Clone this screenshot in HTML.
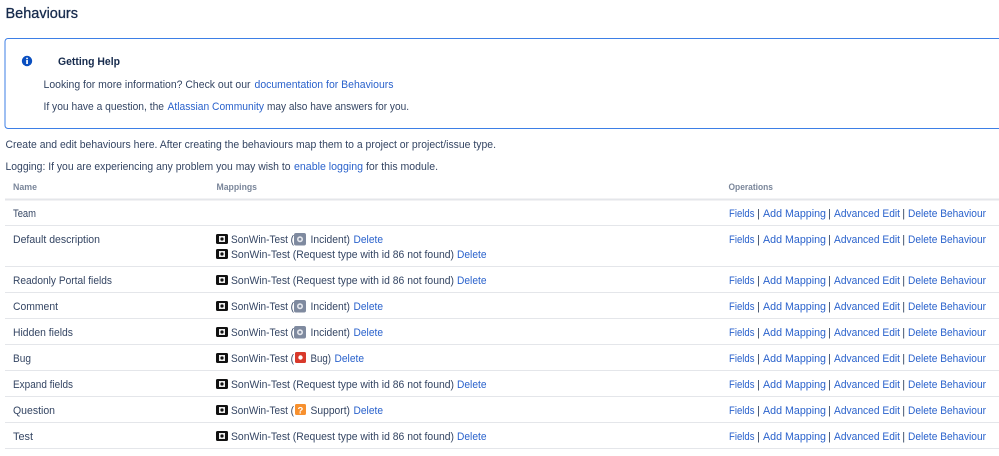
<!DOCTYPE html>
<html><head><meta charset="utf-8"><title>Behaviours</title>
<style>
html,body{margin:0;padding:0;background:#fff;width:999px;height:456px;overflow:hidden}
svg{display:block}
text{font-family:"Liberation Sans",sans-serif;font-size:11px;fill:#344563;white-space:pre}
.a{fill:#2a62cc}
.h{font-size:9.5px;fill:#7a869a;font-weight:bold}
</style></head><body>
<svg width="999" height="456" viewBox="0 0 999 456" xmlns="http://www.w3.org/2000/svg">
<defs>
<g id="logo"><rect x="0" y="0" width="12" height="10" rx="1.5" fill="#111"/><rect x="3" y="2" width="6" height="6" fill="#eee"/><circle cx="6" cy="5" r="1.6" fill="#111"/></g>
<g id="inc"><rect x="0" y="0" width="12" height="12.500" rx="2" fill="#7f8a9f"/><circle cx="6" cy="6.250" r="3" fill="#e6e8ee"/><circle cx="6" cy="6.250" r="1.400" fill="#7f8a9f"/></g>
</defs>
<text lengthAdjust="spacingAndGlyphs" x="5.500" y="18" textLength="72.500" style="font-size:15px;fill:#172b4d;stroke:#172b4d;stroke-width:.3">Behaviours</text>
<path d="M1000 38.500H8a3 3 0 0 0-3 3V125.500a3 3 0 0 0 3 3H1000" fill="none" stroke="#3d7fe6" stroke-width="1"/>
<circle cx="27" cy="61" r="5.200" fill="#0a4fc0"/><rect x="26.200" y="60" width="1.700" height="4" fill="#fff"/><rect x="26.200" y="57.700" width="1.700" height="1.500" fill="#fff"/>
<text lengthAdjust="spacingAndGlyphs" x="58" y="65" textLength="62" style="font-weight:bold;fill:#172b4d">Getting Help</text>
<text lengthAdjust="spacingAndGlyphs" x="43.500" y="88" textLength="207">Looking for more information? Check out our</text>
<text lengthAdjust="spacingAndGlyphs" class="a" x="254.500" y="88" textLength="139">documentation for Behaviours</text>
<text lengthAdjust="spacingAndGlyphs" x="43.500" y="110" textLength="120.500">If you have a question, the</text>
<text lengthAdjust="spacingAndGlyphs" class="a" x="167.500" y="110" textLength="96.500">Atlassian Community</text>
<text lengthAdjust="spacingAndGlyphs" x="267" y="110" textLength="142">may also have answers for you.</text>
<text lengthAdjust="spacingAndGlyphs" x="5.500" y="148" textLength="490.500">Create and edit behaviours here. After creating the behaviours map them to a project or project/issue type.</text>
<text lengthAdjust="spacingAndGlyphs" x="5.500" y="170" textLength="285">Logging: If you are experiencing any problem you may wish to</text>
<text lengthAdjust="spacingAndGlyphs" class="a" x="294" y="170" textLength="69">enable logging</text>
<text lengthAdjust="spacingAndGlyphs" x="366" y="170" textLength="72">for this module.</text>
<text lengthAdjust="spacingAndGlyphs" class="h" x="13" y="190" textLength="24">Name</text>
<text lengthAdjust="spacingAndGlyphs" class="h" x="216.500" y="190" textLength="40.500">Mappings</text>
<text lengthAdjust="spacingAndGlyphs" class="h" x="728.500" y="190" textLength="44.500">Operations</text>
<g fill="#e4e6ea">
<rect x="5" y="198.500" width="994" height="2"/>
<rect x="5" y="225" width="994" height="1"/>
<rect x="5" y="266" width="994" height="1"/>
<rect x="5" y="292" width="994" height="1"/>
<rect x="5" y="318" width="994" height="1"/>
<rect x="5" y="344" width="994" height="1"/>
<rect x="5" y="370" width="994" height="1"/>
<rect x="5" y="396" width="994" height="1"/>
<rect x="5" y="422" width="994" height="1"/>
<rect x="5" y="448" width="994" height="1"/>
</g>
<text lengthAdjust="spacingAndGlyphs" x="13" y="217" textLength="23">Team</text>
<text lengthAdjust="spacingAndGlyphs" x="13" y="243" textLength="87">Default description</text>
<text lengthAdjust="spacingAndGlyphs" x="13" y="284" textLength="99">Readonly Portal fields</text>
<text lengthAdjust="spacingAndGlyphs" x="13" y="310" textLength="45">Comment</text>
<text lengthAdjust="spacingAndGlyphs" x="13" y="336" textLength="60">Hidden fields</text>
<text lengthAdjust="spacingAndGlyphs" x="13" y="362" textLength="18">Bug</text>
<text lengthAdjust="spacingAndGlyphs" x="13" y="388" textLength="60">Expand fields</text>
<text lengthAdjust="spacingAndGlyphs" x="13" y="414" textLength="42">Question</text>
<text lengthAdjust="spacingAndGlyphs" x="13" y="440" textLength="20">Test</text>

<use href="#logo" x="216" y="234"/>
<text lengthAdjust="spacingAndGlyphs" x="231" y="243" textLength="63">SonWin-Test (</text>
<use href="#inc" x="294" y="233"/>
<text lengthAdjust="spacingAndGlyphs" x="310.500" y="243" textLength="39.500">Incident)</text>
<text lengthAdjust="spacingAndGlyphs" class="a" x="353.500" y="243" textLength="29.500">Delete</text>
<use href="#logo" x="216" y="249"/>
<text lengthAdjust="spacingAndGlyphs" x="231" y="258" textLength="223">SonWin-Test (Request type with id 86 not found)</text>
<text lengthAdjust="spacingAndGlyphs" class="a" x="457" y="258" textLength="29.500">Delete</text>

<use href="#logo" x="216" y="275"/>
<text lengthAdjust="spacingAndGlyphs" x="231" y="284" textLength="223">SonWin-Test (Request type with id 86 not found)</text>
<text lengthAdjust="spacingAndGlyphs" class="a" x="457" y="284" textLength="29.500">Delete</text>

<use href="#logo" x="216" y="301"/>
<text lengthAdjust="spacingAndGlyphs" x="231" y="310" textLength="63">SonWin-Test (</text>
<use href="#inc" x="294" y="300"/>
<text lengthAdjust="spacingAndGlyphs" x="310.500" y="310" textLength="39.500">Incident)</text>
<text lengthAdjust="spacingAndGlyphs" class="a" x="353.500" y="310" textLength="29.500">Delete</text>

<use href="#logo" x="216" y="327"/>
<text lengthAdjust="spacingAndGlyphs" x="231" y="336" textLength="63">SonWin-Test (</text>
<use href="#inc" x="294" y="326"/>
<text lengthAdjust="spacingAndGlyphs" x="310.500" y="336" textLength="39.500">Incident)</text>
<text lengthAdjust="spacingAndGlyphs" class="a" x="353.500" y="336" textLength="29.500">Delete</text>

<use href="#logo" x="216" y="353"/>
<text lengthAdjust="spacingAndGlyphs" x="231" y="362" textLength="63">SonWin-Test (</text>
<rect x="295" y="352" width="11" height="11" rx="1.500" fill="#d8392b"/><circle cx="300.500" cy="357.500" r="2.200" fill="#fff"/>
<text lengthAdjust="spacingAndGlyphs" x="310.500" y="362" textLength="20.500">Bug)</text>
<text lengthAdjust="spacingAndGlyphs" class="a" x="334.500" y="362" textLength="29.500">Delete</text>

<use href="#logo" x="216" y="379"/>
<text lengthAdjust="spacingAndGlyphs" x="231" y="388" textLength="223">SonWin-Test (Request type with id 86 not found)</text>
<text lengthAdjust="spacingAndGlyphs" class="a" x="457" y="388" textLength="29.500">Delete</text>

<use href="#logo" x="216" y="405"/>
<text lengthAdjust="spacingAndGlyphs" x="231" y="414" textLength="63">SonWin-Test (</text>
<rect x="295" y="404" width="11" height="11" rx="1.500" fill="#f7902e"/>
<text x="297.500" y="413.500" style="font-size:9.500px;font-weight:bold;fill:#fff">?</text>
<text lengthAdjust="spacingAndGlyphs" x="310.500" y="414" textLength="39.500">Support)</text>
<text lengthAdjust="spacingAndGlyphs" class="a" x="353.500" y="414" textLength="29.500">Delete</text>

<use href="#logo" x="216" y="431"/>
<text lengthAdjust="spacingAndGlyphs" x="231" y="440" textLength="223">SonWin-Test (Request type with id 86 not found)</text>
<text lengthAdjust="spacingAndGlyphs" class="a" x="457" y="440" textLength="29.500">Delete</text>

<text lengthAdjust="spacingAndGlyphs" class="a" x="729" y="217" textLength="25.500">Fields</text><text x="757" y="217">|</text><text lengthAdjust="spacingAndGlyphs" class="a" x="763" y="217" textLength="63">Add Mapping</text><text x="828" y="217">|</text><text lengthAdjust="spacingAndGlyphs" class="a" x="834" y="217" textLength="66">Advanced Edit</text><text x="902.300" y="217">|</text><text lengthAdjust="spacingAndGlyphs" class="a" x="908" y="217" textLength="78">Delete Behaviour</text>
<text lengthAdjust="spacingAndGlyphs" class="a" x="729" y="243" textLength="25.500">Fields</text><text x="757" y="243">|</text><text lengthAdjust="spacingAndGlyphs" class="a" x="763" y="243" textLength="63">Add Mapping</text><text x="828" y="243">|</text><text lengthAdjust="spacingAndGlyphs" class="a" x="834" y="243" textLength="66">Advanced Edit</text><text x="902.300" y="243">|</text><text lengthAdjust="spacingAndGlyphs" class="a" x="908" y="243" textLength="78">Delete Behaviour</text>
<text lengthAdjust="spacingAndGlyphs" class="a" x="729" y="284" textLength="25.500">Fields</text><text x="757" y="284">|</text><text lengthAdjust="spacingAndGlyphs" class="a" x="763" y="284" textLength="63">Add Mapping</text><text x="828" y="284">|</text><text lengthAdjust="spacingAndGlyphs" class="a" x="834" y="284" textLength="66">Advanced Edit</text><text x="902.300" y="284">|</text><text lengthAdjust="spacingAndGlyphs" class="a" x="908" y="284" textLength="78">Delete Behaviour</text>
<text lengthAdjust="spacingAndGlyphs" class="a" x="729" y="310" textLength="25.500">Fields</text><text x="757" y="310">|</text><text lengthAdjust="spacingAndGlyphs" class="a" x="763" y="310" textLength="63">Add Mapping</text><text x="828" y="310">|</text><text lengthAdjust="spacingAndGlyphs" class="a" x="834" y="310" textLength="66">Advanced Edit</text><text x="902.300" y="310">|</text><text lengthAdjust="spacingAndGlyphs" class="a" x="908" y="310" textLength="78">Delete Behaviour</text>
<text lengthAdjust="spacingAndGlyphs" class="a" x="729" y="336" textLength="25.500">Fields</text><text x="757" y="336">|</text><text lengthAdjust="spacingAndGlyphs" class="a" x="763" y="336" textLength="63">Add Mapping</text><text x="828" y="336">|</text><text lengthAdjust="spacingAndGlyphs" class="a" x="834" y="336" textLength="66">Advanced Edit</text><text x="902.300" y="336">|</text><text lengthAdjust="spacingAndGlyphs" class="a" x="908" y="336" textLength="78">Delete Behaviour</text>
<text lengthAdjust="spacingAndGlyphs" class="a" x="729" y="362" textLength="25.500">Fields</text><text x="757" y="362">|</text><text lengthAdjust="spacingAndGlyphs" class="a" x="763" y="362" textLength="63">Add Mapping</text><text x="828" y="362">|</text><text lengthAdjust="spacingAndGlyphs" class="a" x="834" y="362" textLength="66">Advanced Edit</text><text x="902.300" y="362">|</text><text lengthAdjust="spacingAndGlyphs" class="a" x="908" y="362" textLength="78">Delete Behaviour</text>
<text lengthAdjust="spacingAndGlyphs" class="a" x="729" y="388" textLength="25.500">Fields</text><text x="757" y="388">|</text><text lengthAdjust="spacingAndGlyphs" class="a" x="763" y="388" textLength="63">Add Mapping</text><text x="828" y="388">|</text><text lengthAdjust="spacingAndGlyphs" class="a" x="834" y="388" textLength="66">Advanced Edit</text><text x="902.300" y="388">|</text><text lengthAdjust="spacingAndGlyphs" class="a" x="908" y="388" textLength="78">Delete Behaviour</text>
<text lengthAdjust="spacingAndGlyphs" class="a" x="729" y="414" textLength="25.500">Fields</text><text x="757" y="414">|</text><text lengthAdjust="spacingAndGlyphs" class="a" x="763" y="414" textLength="63">Add Mapping</text><text x="828" y="414">|</text><text lengthAdjust="spacingAndGlyphs" class="a" x="834" y="414" textLength="66">Advanced Edit</text><text x="902.300" y="414">|</text><text lengthAdjust="spacingAndGlyphs" class="a" x="908" y="414" textLength="78">Delete Behaviour</text>
<text lengthAdjust="spacingAndGlyphs" class="a" x="729" y="440" textLength="25.500">Fields</text><text x="757" y="440">|</text><text lengthAdjust="spacingAndGlyphs" class="a" x="763" y="440" textLength="63">Add Mapping</text><text x="828" y="440">|</text><text lengthAdjust="spacingAndGlyphs" class="a" x="834" y="440" textLength="66">Advanced Edit</text><text x="902.300" y="440">|</text><text lengthAdjust="spacingAndGlyphs" class="a" x="908" y="440" textLength="78">Delete Behaviour</text>
</svg>
</body></html>
